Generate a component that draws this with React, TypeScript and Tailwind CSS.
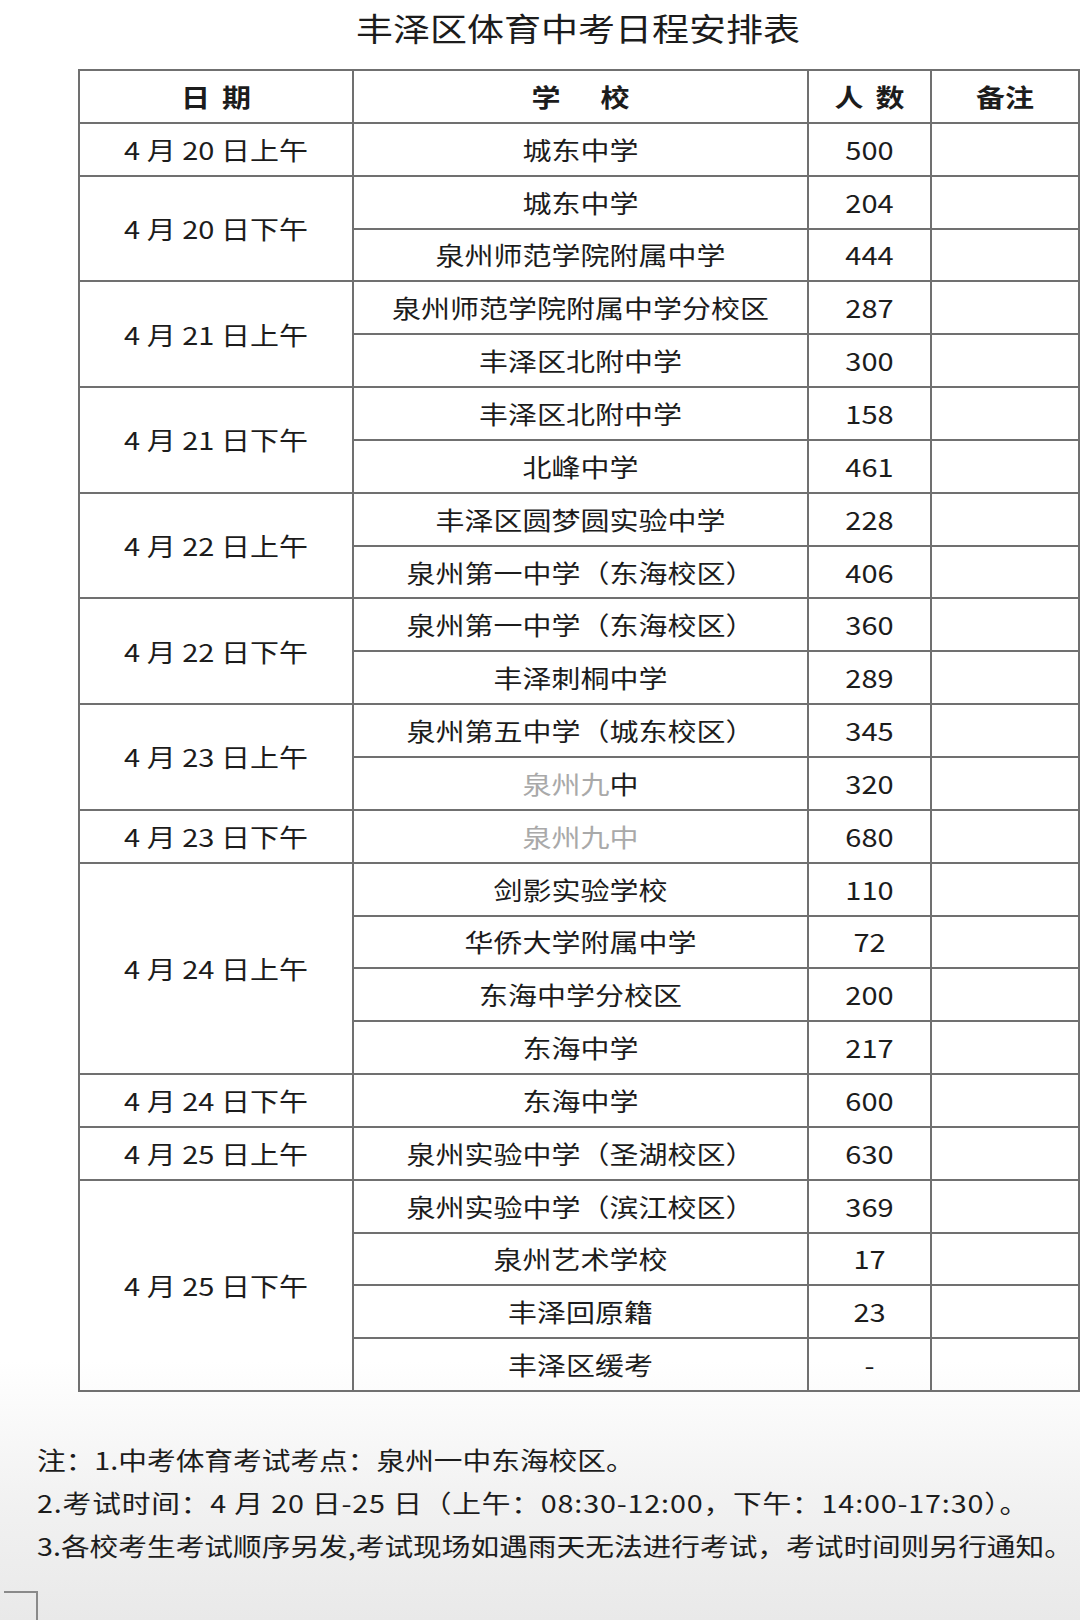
import React from "react";

type Row = { school: React.ReactNode; count: string };
type Group = { date: string; rows: Row[] };

const gray = (dark: boolean) => (
  <>
    <span className="text-[#a9a9a9]">泉州九</span>
    <span className={dark ? "text-[#1c1c1c]" : "text-[#a9a9a9]"}>中</span>
  </>
);

const groups: Group[] = [
  { date: "4 月 20 日上午", rows: [{ school: "城东中学", count: "500" }] },
  {
    date: "4 月 20 日下午",
    rows: [
      { school: "城东中学", count: "204" },
      { school: "泉州师范学院附属中学", count: "444" },
    ],
  },
  {
    date: "4 月 21 日上午",
    rows: [
      { school: "泉州师范学院附属中学分校区", count: "287" },
      { school: "丰泽区北附中学", count: "300" },
    ],
  },
  {
    date: "4 月 21 日下午",
    rows: [
      { school: "丰泽区北附中学", count: "158" },
      { school: "北峰中学", count: "461" },
    ],
  },
  {
    date: "4 月 22 日上午",
    rows: [
      { school: "丰泽区圆梦圆实验中学", count: "228" },
      { school: "泉州第一中学（东海校区）", count: "406" },
    ],
  },
  {
    date: "4 月 22 日下午",
    rows: [
      { school: "泉州第一中学（东海校区）", count: "360" },
      { school: "丰泽刺桐中学", count: "289" },
    ],
  },
  {
    date: "4 月 23 日上午",
    rows: [
      { school: "泉州第五中学（城东校区）", count: "345" },
      { school: gray(true), count: "320" },
    ],
  },
  { date: "4 月 23 日下午", rows: [{ school: gray(false), count: "680" }] },
  {
    date: "4 月 24 日上午",
    rows: [
      { school: "剑影实验学校", count: "110" },
      { school: "华侨大学附属中学", count: "72" },
      { school: "东海中学分校区", count: "200" },
      { school: "东海中学", count: "217" },
    ],
  },
  { date: "4 月 24 日下午", rows: [{ school: "东海中学", count: "600" }] },
  { date: "4 月 25 日上午", rows: [{ school: "泉州实验中学（圣湖校区）", count: "630" }] },
  {
    date: "4 月 25 日下午",
    rows: [
      { school: "泉州实验中学（滨江校区）", count: "369" },
      { school: "泉州艺术学校", count: "17" },
      { school: "丰泽回原籍", count: "23" },
      { school: "丰泽区缓考", count: "-" },
    ],
  },
];

const spanClass: Record<number, string> = {
  1: "row-span-1",
  2: "row-span-2",
  4: "row-span-4",
};

const cell =
  "flex items-center justify-center border-r-2 border-b-2 border-[#707070] text-[29px] text-[#1c1c1c]";

function T({ children }: { children: React.ReactNode }) {
  return <span className="inline-block scale-y-[0.86] whitespace-pre leading-none">{children}</span>;
}

export default function App() {
  return (
    <div className="relative w-[1080px] h-[1620px] overflow-hidden bg-[linear-gradient(180deg,#ffffff_0%,#ffffff_84%,#f1f1f1_93%,#e9e9e9_100%)] font-['Noto_Sans_CJK_SC',sans-serif] text-[#1c1c1c]">
      <div className="flex h-[54px] items-center justify-center pl-[76px] text-[37px]">
        <T>丰泽区体育中考日程安排表</T>
      </div>
      <div className="mt-[15px] ml-[78px] grid grid-cols-[274px_455px_123px_148px] grid-rows-[repeat(25,52.85px)] border-l-2 border-t-2 border-[#707070]">
        <div className={`${cell} font-bold gap-[12px]`}>
          <T>日</T>
          <T>期</T>
        </div>
        <div className={`${cell} font-bold gap-[40px]`}>
          <T>学</T>
          <T>校</T>
        </div>
        <div className={`${cell} font-bold gap-[12px]`}>
          <T>人</T>
          <T>数</T>
        </div>
        <div className={`${cell} font-bold`}>
          <T>备注</T>
        </div>
        {groups.map((g, gi) => (
          <React.Fragment key={gi}>
            {g.rows.map((r, ri) => (
              <React.Fragment key={ri}>
                {ri === 0 && (
                  <div className={`${cell} ${spanClass[g.rows.length]}`}>
                    <T>{g.date}</T>
                  </div>
                )}
                <div className={cell}>
                  <T>{r.school}</T>
                </div>
                <div className={cell}>
                  <T>{r.count}</T>
                </div>
                <div className={cell}></div>
              </React.Fragment>
            ))}
          </React.Fragment>
        ))}
      </div>
      <div className="mt-[46px] flex flex-col pl-[37px] text-[28.7px] leading-[43px] text-[#1c1c1c]">
        <div className="whitespace-nowrap">
          <T>注：1.中考体育考试考点：泉州一中东海校区。</T>
        </div>
        <div className="whitespace-nowrap tracking-[0.85px]">
          <T>2.考试时间：4 月 20 日-25 日（上午：08:30-12:00，下午：14:00-17:30）。</T>
        </div>
        <div className="whitespace-nowrap">
          <T>3.各校考生考试顺序另发,考试现场如遇雨天无法进行考试，考试时间则另行通知。</T>
        </div>
      </div>
      <div className="absolute left-[4px] top-[1591px] h-[40px] w-[34px] border-t-2 border-r-2 border-[#8a8a8a]" />
    </div>
  );
}
